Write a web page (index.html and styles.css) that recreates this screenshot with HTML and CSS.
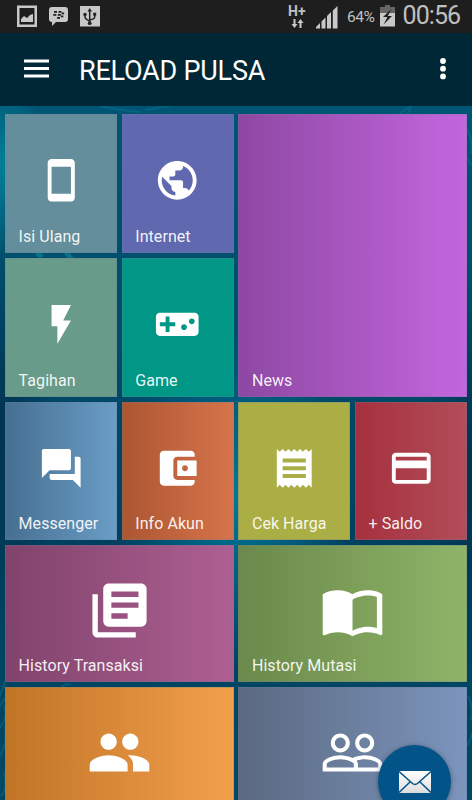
FILE: index.html
```html
<!DOCTYPE html>
<html lang="id">
<head>
<meta charset="utf-8">
<title>Reload Pulsa</title>
<link rel="stylesheet" href="styles.css">
</head>
<body>
<div class="status">
  <svg class="status-left" width="110" height="33" viewBox="0 0 110 33">
    <path fill="#c8c8c8" fill-rule="evenodd" d="M17 5.500h20v21.500H17zM19.500 8v16.500h15V8z"/>
    <path fill="#c8c8c8" d="M21 22v-3l3-3 3 2 3-3 3-1v8z"/>
    <path fill="#c8c8c8" d="M52 7h13q3 0 3 3v9q0 3-3 3h-9l-4 4v-4q-3 0-3-3v-9q0-3 3-3z"/>
    <g fill="#222"><rect x="54" y="11" width="3" height="1.800"/><rect x="58.500" y="11" width="3" height="1.800"/><rect x="53.300" y="14" width="3" height="1.800"/><rect x="57.800" y="14" width="3" height="1.800"/><rect x="61.500" y="12.500" width="2.600" height="1.800"/><rect x="57" y="17" width="3" height="1.800"/><rect x="60.800" y="15.500" width="2.600" height="1.800"/></g>
    <rect x="80" y="6" width="20" height="20.500" fill="#c8c8c8"/>
    <g fill="none" stroke="#222" stroke-width="1.500"><path d="M89.700 10v12M85 15v2q0 2 4.700 4M94.700 14v3q0 2-5 3"/></g>
    <g fill="#222"><path d="M87.500 11.500 89.700 8l2.300 3.500z"/><circle cx="89.700" cy="23.200" r="1.900"/><circle cx="85" cy="14.500" r="1.700"/><rect x="93.200" y="12.700" width="3" height="3"/></g>
  </svg>
  <div class="net"><span>H+</span>
    <svg width="13" height="9" viewBox="0 0 13 9"><path fill="#c8c8c8" d="M2.500 0h2v5h2l-3 4-3-4h2zM8.500 9h2V4h2l-3-4-3 4h2z"/></svg>
  </div>
  <svg class="signal" width="22" height="23" viewBox="0 0 22 23"><path fill="#c8c8c8" d="M0 22.500v-1.500l4-4v5.500zM5.500 22.500v-7l4-4v11zM11 22.500V10l4-4v16.500zM16.800 22.500V4.500L21.500 0v22.500z"/></svg>
  <span class="percent">64%</span>
  <svg class="battery" width="16" height="22" viewBox="0 0 16 22"><path fill="#666" d="M5 0h5v2h5v7H0V2h5z"/><path fill="#c8c8c8" d="M0 8h15v13.500H0z"/><path fill="#1e1e1e" d="m11.500 4-8.500 8h4.500l-4 7.500 8.500-8.500H7.800z"/></svg>
  <span class="clock">00:56</span>
</div>
<header class="bar">
  <svg class="menu" width="25" height="19" viewBox="0 0 25 19"><path fill="#fff" d="M0 .5h25v3H0zM0 8h25v3H0zM0 15.400h25v3H0z"/></svg>
  <h1>RELOAD PULSA</h1>
  <svg class="more" width="8" height="22" viewBox="0 0 8 22"><g fill="#fff"><circle cx="4" cy="3" r="2.900"/><circle cx="4" cy="10.700" r="2.900"/><circle cx="4" cy="18.400" r="2.900"/></g></svg>
</header>
<main class="board">
  <svg class="swirls" width="472" height="694" viewBox="0 0 472 694"><g fill="none" stroke="#0b82a0" stroke-opacity=".35" stroke-width="2"><path d="M400 9c4-8 8-6 12-9M407 9l4-8M100 0q12 3 40 6M145 4l25-4M466 22q8 12 5 25M466 50q4 9 7 9M0 590q3-8 5-15M0 600l6-9M0 622q8-10 4-22M61 582q5-6 10-3M0 650q7-10 5-30M1 690q7-8 3-24M468 590q6 12 3 24M467 640q4-6 5-13"/></g><g stroke="#14a0b4" stroke-opacity=".4" stroke-width="5"><path d="m66 146 6 8M37 147l5 4"/></g></svg>
  <div class="grid">
    <div class="tile isi"><svg viewBox="0 0 24 24"><path d="M17 1.010 7 1c-1.100 0-1.990.9-1.990 2v18c0 1.100.89 2 1.990 2h10c1.100 0 2-.9 2-2V3c0-1.100-.9-1.990-2-1.990zM17 19H7V5h10v14z"/></svg><span>Isi Ulang</span></div>
    <div class="tile internet"><svg viewBox="0 0 24 24"><path d="M12 2C6.480 2 2 6.480 2 12s4.480 10 10 10 10-4.480 10-10S17.520 2 12 2zm-1 17.930c-3.950-.49-7-3.850-7-7.930 0-.62.080-1.210.21-1.790L9 15v1c0 1.100.9 2 2 2v1.930zm6.900-2.540c-.26-.81-1-1.390-1.900-1.390h-1v-3c0-.55-.45-1-1-1H8v-2h2c.55 0 1-.45 1-1V7h2c1.100 0 2-.9 2-2v-.41c2.930 1.190 5 4.060 5 7.410 0 2.080-.8 3.970-2.100 5.390z"/></svg><span>Internet</span></div>
    <div class="tile news"><span>News</span></div>
    <div class="tile tagihan"><svg viewBox="0 0 24 24"><path d="M7 2v11h3v9l7-12h-4l4-8z"/></svg><span>Tagihan</span></div>
    <div class="tile game"><svg viewBox="0 0 24 24"><path d="M21 6H3c-1.100 0-2 .9-2 2v8c0 1.100.9 2 2 2h18c1.100 0 2-.9 2-2V8c0-1.100-.9-2-2-2zm-10 7H8v3H6v-3H3v-2h3V8h2v3h3v2zm4.500 2c-.83 0-1.500-.67-1.500-1.500s.67-1.500 1.500-1.500 1.500.67 1.500 1.500-.67 1.500-1.500 1.500zm4-3c-.83 0-1.500-.67-1.500-1.500S18.670 9 19.500 9s1.500.67 1.500 1.500-.67 1.500-1.500 1.500z"/></svg><span>Game</span></div>
    <div class="tile messenger"><svg viewBox="0 0 24 24"><path d="M21 6h-2v9H6v2c0 .55.45 1 1 1h11l4 4V7c0-.55-.45-1-1-1zm-4 6V3c0-.55-.45-1-1-1H3c-.55 0-1 .45-1 1v14l4-4h10c.55 0 1-.45 1-1z"/></svg><span>Messenger</span></div>
    <div class="tile akun"><svg viewBox="0 0 24 24"><path d="M21 18v1c0 1.100-.9 2-2 2H5c-1.110 0-2-.9-2-2V5c0-1.100.89-2 2-2h14c1.100 0 2 .9 2 2v1h-9c-1.110 0-2 .9-2 2v8c0 1.100.89 2 2 2h9zm-9-2h10V8H12v8zm4-2.500c-.83 0-1.500-.67-1.500-1.500s.67-1.500 1.500-1.500 1.500.67 1.500 1.500-.67 1.500-1.500 1.500z"/></svg><span>Info Akun</span></div>
    <div class="tile harga"><svg viewBox="0 0 24 24"><path d="M18 17H6v-2h12v2zm0-4H6v-2h12v2zm0-4H6V7h12v2zM3 22l1.500-1.500L6 22l1.500-1.500L9 22l1.500-1.500L12 22l1.500-1.500L15 22l1.500-1.500L18 22l1.500-1.500L21 22V2l-1.500 1.500L18 2l-1.500 1.500L15 2l-1.500 1.500L12 2l-1.500 1.500L9 2 7.500 3.500 6 2 4.500 3.500 3 2v20z"/></svg><span>Cek Harga</span></div>
    <div class="tile saldo"><svg viewBox="0 0 24 24"><path d="M20 4H4c-1.110 0-1.990.89-1.990 2L2 18c0 1.110.89 2 2 2h16c1.110 0 2-.89 2-2V6c0-1.110-.89-2-2-2zm0 14H4v-6h16v6zm0-10H4V6h16v2z"/></svg><span>+ Saldo</span></div>
    <div class="tile wide transaksi"><svg viewBox="0 0 24 24"><path d="M4 6H2v14c0 1.100.9 2 2 2h14v-2H4V6zm16-4H8c-1.100 0-2 .9-2 2v12c0 1.100.9 2 2 2h12c1.100 0 2-.9 2-2V4c0-1.100-.9-2-2-2zm-1 9H9V9h10v2zm-4 4H9v-2h6v2zm4-8H9V5h10v2z"/></svg><span>History Transaksi</span></div>
    <div class="tile wide mutasi"><svg viewBox="0 0 24 24"><path d="M21 5c-1.110-.35-2.330-.5-3.500-.5-1.950 0-4.050.4-5.500 1.500-1.450-1.100-3.550-1.500-5.500-1.500S2.450 4.900 1 6v14.650c0 .25.25.5.5.5.1 0 .15-.05.25-.05C3.100 20.450 5.050 20 6.500 20c1.950 0 4.050.4 5.500 1.500 1.350-.85 3.800-1.500 5.500-1.500 1.650 0 3.350.3 4.750 1.050.1.050.15.050.25.050.25 0 .5-.25.5-.5V6c-.6-.45-1.250-.75-2-1zm0 13.500c-1.100-.35-2.300-.5-3.500-.5-1.700 0-4.150.65-5.500 1.500V8c1.350-.85 3.800-1.500 5.500-1.500 1.200 0 2.400.15 3.500.5v11.500z"/></svg><span>History Mutasi</span></div>
    <div class="tile wide people"><svg viewBox="0 0 24 24"><path d="M16 11c1.660 0 2.990-1.340 2.990-3S17.660 5 16 5c-1.660 0-3 1.340-3 3s1.340 3 3 3zm-8 0c1.660 0 2.990-1.340 2.990-3S9.660 5 8 5C6.340 5 5 6.340 5 8s1.340 3 3 3zm0 2c-2.330 0-7 1.170-7 3.500V19h14v-2.500c0-2.330-4.670-3.500-7-3.500zm8 0c-.29 0-.62.020-.97.050 1.160.84 1.970 1.970 1.970 3.450V19h6v-2.500c0-2.330-4.670-3.500-7-3.500z"/></svg></div>
    <div class="tile wide group"><svg viewBox="0 0 24 24"><path d="M16.500 13c-1.200 0-3.070.34-4.500 1-1.430-.67-3.300-1-4.500-1C5.330 13 1 14.080 1 16.250V19h22v-2.750c0-2.170-4.330-3.250-6.500-3.250zm-4 4.500h-10v-1.250c0-.54 2.560-1.750 5-1.750s5 1.210 5 1.750v1.250zm9 0H14v-1.250c0-.46-.2-.86-.52-1.220.88-.3 1.960-.53 3.020-.53 2.440 0 5 1.210 5 1.750v1.250zM7.500 12c1.930 0 3.500-1.570 3.500-3.500S9.430 5 7.500 5 4 6.570 4 8.500 5.570 12 7.500 12zm0-5.500c1.100 0 2 .9 2 2s-.9 2-2 2-2-.9-2-2 .9-2 2-2zm9 5.500c1.930 0 3.500-1.570 3.500-3.500S18.430 5 16.500 5 13 6.570 13 8.500s1.570 3.500 3.500 3.500zm0-5.500c1.100 0 2 .9 2 2s-.9 2-2 2-2-.9-2-2 .9-2 2-2z"/></svg></div>
  </div>
  <div class="fab"><svg width="32" height="22" viewBox="0 0 32 22"><defs><linearGradient id="m" x2="0" y2="1"><stop stop-color="#fff"/><stop offset="1" stop-color="#ddd"/></linearGradient></defs><rect width="32" height="22" fill="url(#m)"/><path fill="none" stroke="#025388" stroke-width="1.500" d="m0 .5 13.500 12q2.500 1.800 5 0L32 .5M0 21.500l11.500-11M32 21.500l-11.500-11"/></svg></div>
</main>
</body>
</html>
```
FILE: styles.css
```css
* { box-sizing: border-box; }
body {
  margin: 0;
  width: 472px;
  height: 800px;
  overflow: hidden;
  display: flex;
  flex-direction: column;
  font-family: Roboto, sans-serif;
  background: #004a68;
}
svg { display: block; flex: none; }
.status {
  height: 33px;
  flex: none;
  display: flex;
  align-items: flex-start;
  background: #1e1e1e;
  color: #c0c0c0;
}
.net {
  width: 18px;
  margin-left: 178px;
  padding-top: 5px;
  font-size: 14px;
  line-height: 13px;
  font-weight: 700;
}
.net span { display: block; height: 13px; }
.net svg { margin: 1px 0 0 3px; }
.signal { margin: 6px 0 0 10px; }
.percent { width: 32px; margin-left: 9px; font-size: 15.500px; line-height: 35px; letter-spacing: -.4px; }
.battery { margin: 5px 0 0 1px; }
.clock { margin-left: 6.500px; font-size: 25px; line-height: 32px; letter-spacing: -.9px; }
.bar {
  height: 73px;
  flex: none;
  display: flex;
  align-items: center;
  padding: 0 25px 0 24px;
  background: #002735;
  color: #fff;
}
.menu { margin-top: -2px; }
.bar h1 { margin: 2px auto 0 30px; font-size: 27px; line-height: 32px; font-weight: 400; letter-spacing: -.22px; }
.more { margin-top: -1px; }
.board {
  position: relative;
  flex: 1;
  min-height: 0;
  overflow: hidden;
  padding: 8px 5px 0;
  background:
    radial-gradient(ellipse 50px 90px at 0 60px, #008098, transparent),
    radial-gradient(ellipse 120px 170px at 236px 390px, #007898, transparent),
    radial-gradient(ellipse 60px 190px at 0 330px, #003350, transparent),
    radial-gradient(ellipse 50px 200px at 472px 370px, #003350, transparent),
    linear-gradient(#005574 0, #004c6c 35%, #00405f 60%, #004866 100%);
}
.swirls { position: absolute; left: 0; top: 0; }
.grid {
  position: relative;
  display: grid;
  grid-template-columns: repeat(4, 112px);
  column-gap: 4.670px;
  grid-template-rows: 139px 139px 138px 137px 137px;
  row-gap: 5px;
}
.tile {
  display: flex;
  flex-direction: column;
  align-items: center;
  justify-content: space-between;
  padding: 43px 13px 6px;
  color: rgba(255, 255, 255, .93);
  box-shadow: inset 0 0 0 1px rgba(110, 125, 150, .3);
}
.tile svg { width: 46.500px; height: 46.500px; fill: #fff; }
.tile span { align-self: flex-start; margin: auto 0 0 .6px; font-size: 16px; line-height: 20px; letter-spacing: .06px; white-space: nowrap; }
.wide { grid-column: span 2; padding-top: 32.500px; }
.wide svg { width: 65px; height: 65px; }
.isi { background: #648e9c; }
.internet { background: #6069af; }
.news { grid-column: 3 / 5; grid-row: 1 / 3; background: linear-gradient(90deg, #8d48a2, #c466df); }
.tagihan { background: #689b89; }
.game { background: #009787; }
.messenger { background: linear-gradient(90deg, #466f91, #6a9dc6); }
.akun { background: linear-gradient(90deg, #ac5632, #d7744b); }
.harga { background: #abad45; }
.saldo { background: linear-gradient(90deg, #a6303e, #b24d59); }
.transaksi { background: linear-gradient(90deg, #80436b, #ae6093); }
.mutasi { background: linear-gradient(90deg, #6a894b, #8fb468); }
.people { background: linear-gradient(90deg, #c07426, #f3a04c); }
.group { background: linear-gradient(90deg, #5a6980, #7c95bd); }
.fab {
  position: absolute;
  left: 378px;
  top: 639px;
  width: 73px;
  height: 73px;
  border-radius: 50%;
  display: flex;
  align-items: center;
  justify-content: center;
  background: #025388;
  box-shadow: 0 1px 5px rgba(0, 0, 0, .4);
}
```
